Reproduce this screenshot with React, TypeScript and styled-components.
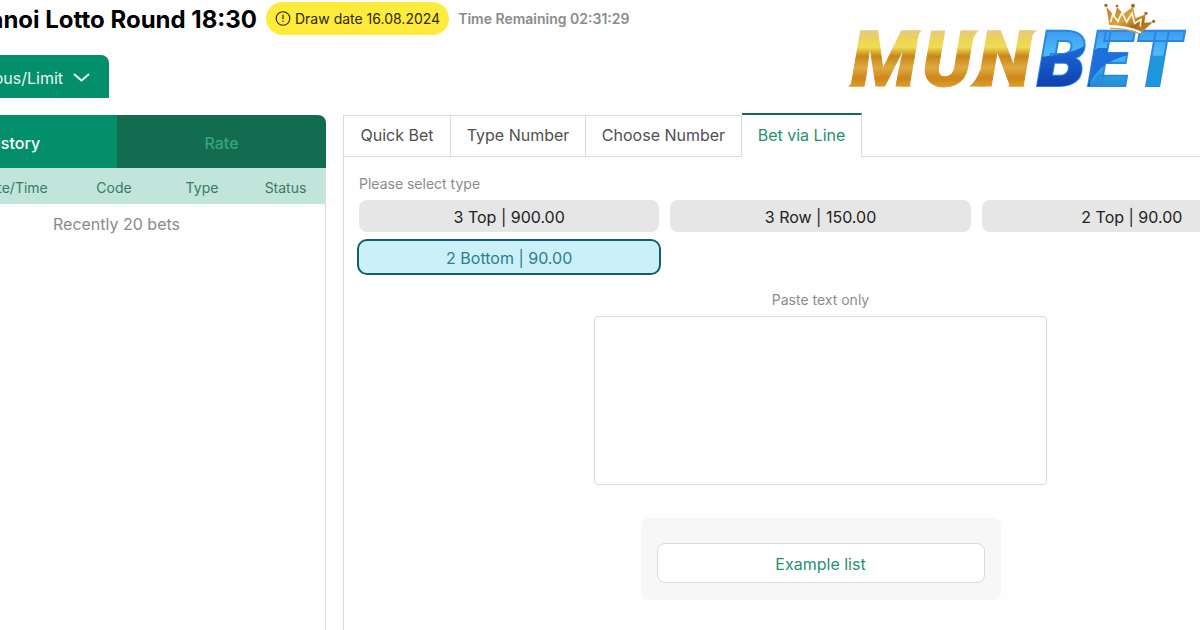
import React, { useState } from "react";
import styled, { createGlobalStyle, css } from "styled-components";

const GlobalStyle = createGlobalStyle`
  *, *::before, *::after { box-sizing: border-box; }
  body {
    margin: 0;
    background: #fefefe;
    color: #111;
    font-family: Inter, "Liberation Sans", sans-serif;
    font-size: 16px;
    overflow: hidden;
  }
  button, textarea { font: inherit; color: inherit; }
`;

const Viewport = styled.div`
  min-height: 100vh;
  overflow: hidden;
`;

const Page = styled.div`
  display: flex;
  flex-direction: column;
  min-height: 100vh;
  margin: 0 -98px 0 -92px;
`;

const Header = styled.header`
  display: flex;
  justify-content: space-between;
  align-items: flex-start;
  height: 115px;
  padding-right: 98px;
`;

const HeaderMain = styled.div`
  display: flex;
  flex-direction: column;
  align-items: flex-start;
  gap: 20px;
  padding-top: 2px;
`;

const TitleRow = styled.div`
  display: flex;
  align-items: center;
  gap: 9px;
  height: 33px;
`;

const Title = styled.h1`
  width: 349px;
  margin: 0;
  padding-top: 2px;
  font-size: 24px;
  line-height: 32px;
  font-weight: 700;
  color: #000;
  text-align: right;
  white-space: nowrap;
`;

const DatePill = styled.span`
  display: flex;
  align-items: center;
  gap: 4px;
  height: 33px;
  padding: 0 9px;
  border-radius: 17px;
  background: #ffeb3b;
  color: #2b2805;
  font-size: 14px;
  white-space: nowrap;
`;

const Remaining = styled.span`
  color: #8b8b8b;
  font-size: 14px;
  font-weight: 600;
  white-space: nowrap;
`;

const LimitButton = styled.button`
  display: flex;
  align-items: center;
  justify-content: flex-end;
  gap: 10px;
  width: 201px;
  height: 43px;
  padding: 2px 19px 0;
  border: 0;
  border-radius: 8px 8px 0 0;
  background: #048f6c;
  color: #e6f6f0;
`;

const Logo = styled.svg`
  flex: none;
  width: 360px;
  height: 100px;
`;

const Columns = styled.div`
  display: flex;
  flex: 1;
  gap: 17px;
`;

const Sidebar = styled.aside`
  flex: none;
  width: 418px;
  border-right: 1px solid #dcdfde;
  border-radius: 8px 8px 0 0;
`;

const SideTabs = styled.div`
  display: flex;
  height: 53px;
  margin-right: -1px;
  border-radius: 8px 8px 0 0;
  overflow: hidden;
`;

const SideTab = styled.button<{ $active: boolean }>`
  flex: 1;
  border: 0;
  padding: 2px 0 0;
  font-weight: 500;
  background: ${(p) => (p.$active ? "#048f6c" : "#136c50")};
  color: ${(p) => (p.$active ? "#fff" : "#2fa77c")};
`;

const History = styled.table`
  width: 100%;
  table-layout: fixed;
  border-collapse: collapse;
  text-align: center;
`;

const HeadCell = styled.th<{ $width?: number }>`
  width: ${(p) => (p.$width ? `${p.$width}px` : "auto")};
  height: 36px;
  padding: 2px 0 0 2px;
  background: #c1e5db;
  color: #3a7a66;
  font-size: 14px;
  font-weight: 400;
`;

const EmptyCell = styled.td`
  height: 40px;
  padding: 0;
  color: #8a8a8a;
`;

const Panel = styled.main`
  flex: 1;
  border-left: 1px solid #dadada;
`;

const Tabs = styled.nav`
  display: grid;
  grid-template-columns: 107px 135px 156px 120px 1fr;
  height: 42px;
`;

const TabRest = styled.div`
  border-bottom: 1px solid #dadada;
`;

const Tab = styled.button<{ $active: boolean }>`
  padding: 0 0 2px;
  border: solid #dadada;
  border-width: 1px 1px 1px 0;
  background: #fff;
  color: #505050;
  white-space: nowrap;
  ${(p) =>
    p.$active &&
    css`
      margin-top: -2px;
      border-top: 2px solid #136c50;
      border-bottom: 0;
      color: #259170;
    `}
`;

const PanelBody = styled.div`
  display: flex;
  flex-direction: column;
  padding: 17px 16px 0 15px;
`;

const Caption = styled.span`
  color: #8c8c8c;
  font-size: 14px;
  line-height: 20px;
`;

const Types = styled.div`
  display: grid;
  grid-template-columns: repeat(3, 1fr);
  gap: 9px 11px;
  margin-top: 6px;
`;

const TypeButton = styled.button<{ $active: boolean }>`
  height: 32px;
  padding: 2px 0 0;
  border: 0;
  border-radius: 8px;
  background: #e6e6e6;
  color: #222;
  ${(p) =>
    p.$active &&
    css`
      background: #ccf0f7;
      color: #2a7f8f;
      outline: 2px solid #0e606a;
    `}
`;

const PasteArea = styled.div`
  display: flex;
  flex-direction: column;
  align-items: center;
  gap: 6px;
  margin-top: 17px;
`;

const PasteLabel = styled.label`
  color: #8c8c8c;
  font-size: 14px;
  line-height: 20px;
`;

const PasteBox = styled.textarea`
  width: 453px;
  height: 169px;
  padding: 8px;
  border: 1px solid #dadada;
  border-radius: 4px;
  background: #fff;
  resize: none;
`;

const ExampleCard = styled.div`
  align-self: center;
  width: 360px;
  margin-top: 33px;
  padding: 25px 16px 17px;
  border-radius: 8px;
  background: #f7f7f7;
`;

const ExampleButton = styled.button`
  width: 100%;
  height: 40px;
  padding: 2px 0 0;
  border: 1px solid #dadada;
  border-radius: 8px;
  background: #fff;
  color: #259170;
`;

function AlertIcon() {
  return (
    <svg width="16" height="16" viewBox="0 0 16 16" fill="none" stroke="currentColor" aria-hidden="true">
      <circle cx="8" cy="7.5" r="6.8" strokeWidth="1.1" />
      <path d="M8 3.8v4.5" strokeWidth="1.2" />
      <path d="M8 9.7v1.4" strokeWidth="1.3" />
    </svg>
  );
}

function ChevronIcon() {
  return (
    <svg width="17" height="10" viewBox="0 0 17 10" fill="none" aria-hidden="true">
      <path d="M1.5 1.5l7 6 7-6" stroke="currentColor" strokeWidth="2" strokeLinecap="round" strokeLinejoin="round" />
    </svg>
  );
}

const logoText = {
  fontFamily: 'Roboto, "Liberation Sans", sans-serif',
  fontWeight: 900,
  fontStyle: "italic",
  fontSize: 78,
} as const;

function MunbetLogo() {
  return (
    <Logo viewBox="0 0 360 100" role="img" aria-label="MUNBET">
      <defs>
        <linearGradient id="gold" gradientUnits="userSpaceOnUse" x1="0" y1="30" x2="0" y2="87">
          <stop offset="0" stopColor="#e6c98c" />
          <stop offset="0.12" stopColor="#ecd05c" />
          <stop offset="0.3" stopColor="#eedd55" />
          <stop offset="0.46" stopColor="#c98619" />
          <stop offset="0.66" stopColor="#deaa40" />
          <stop offset="0.85" stopColor="#cf861b" />
          <stop offset="1" stopColor="#dba02a" />
        </linearGradient>
        <linearGradient id="sky" gradientUnits="userSpaceOnUse" x1="0" y1="30" x2="0" y2="87">
          <stop offset="0" stopColor="#3b9bf0" />
          <stop offset="0.4" stopColor="#4fb9fa" />
          <stop offset="0.6" stopColor="#35b0ec" />
          <stop offset="1" stopColor="#1c8fd0" />
        </linearGradient>
        <linearGradient id="deep" gradientUnits="userSpaceOnUse" x1="0" y1="45" x2="0" y2="87">
          <stop offset="0" stopColor="#1b6cd8" />
          <stop offset="1" stopColor="#103fb0" />
        </linearGradient>
        <linearGradient id="crown" x1="0" y1="0" x2="1" y2="1">
          <stop offset="0" stopColor="#b98224" />
          <stop offset="0.45" stopColor="#d9a441" />
          <stop offset="0.7" stopColor="#a86b14" />
          <stop offset="1" stopColor="#d29a36" />
        </linearGradient>
        <clipPath id="bet">
          <text x="197 248 293" y="86" {...logoText}>BET</text>
        </clipPath>
      </defs>
      <g fill="url(#gold)">
        <text x="11 82 138" y="86" stroke="url(#gold)" strokeWidth="1" {...logoText}>MUN</text>
        <path d="M8 86.5 H24 L18 70 Q14 82 8 86.5Z" />
        <path d="M60 86.5 H71 Q67 82 69 72Z" />
        <path d="M70 30.5 H82 Q76 35 74 48Z" />
        <path d="M122 30.5 H139 Q133 35 130 48Z" />
        <path d="M129 86.5 H146 L140 70 Q136 82 129 86.5Z" />
        <path d="M180 30.5 H197 Q190 35 187 48Z" />
        <path d="M168 86.5 H185 Q179 82 180 72Z" />
      </g>
      <text x="197 248 293" y="86" fill="url(#sky)" stroke="#2b86e2" strokeWidth="2" {...logoText}>BET</text>
      <g clipPath="url(#bet)">
        <path d="M190 57 Q228 57 250 43 L250 90 L190 90Z" fill="url(#deep)" />
        <path d="M245 90 L249 84 Q262 58 296 54 L296 48 L258 48 L240 60Z" fill="#1d6fdc" />
        <path d="M300 54 Q325 59 345 51 L338 90 L300 90Z" fill="#1e97dc" />
      </g>
      <g transform="scale(0.3333)">
        <path
          d="M808 76 L799 20 L824 49 L831 22 L851 41 L879 20 L887 55 L917 43 L913 68 L938 67 L907 96 Q858 74 808 76Z"
          fill="url(#crown)"
        />
        <path
          d="M812 66 L818 44 L834 64 L846 38 L860 66 L876 40 L884 70 L903 58 L901 80"
          fill="none"
          stroke="#fff6df"
          strokeWidth="5"
        />
        <path d="M808 80 Q858 78 903 98" fill="none" stroke="#fff" strokeWidth="6" />
        <path d="M810 85 Q858 84 896 100" fill="none" stroke="#d9a441" strokeWidth="4" />
        <g fill="#a86b1c">
          <circle cx="798" cy="16" r="5" />
          <circle cx="831" cy="18" r="4" />
          <circle cx="879" cy="17" r="6" />
          <circle cx="918" cy="40" r="5" />
          <circle cx="941" cy="64" r="5" />
        </g>
      </g>
    </Logo>
  );
}

const betTabs = ["Quick Bet", "Type Number", "Choose Number", "Bet via Line"];
const betTypes = ["3 Top | 900.00", "3 Row | 150.00", "2 Top | 90.00", "2 Bottom | 90.00"];

export default function App() {
  const [sideTab, setSideTab] = useState("History");
  const [tab, setTab] = useState("Bet via Line");
  const [type, setType] = useState("2 Bottom | 90.00");

  return (
    <Viewport>
      <GlobalStyle />
      <Page>
        <Header>
          <HeaderMain>
            <TitleRow>
              <Title>Hanoi Lotto Round 18:30</Title>
              <DatePill>
                <AlertIcon />
                Draw date 16.08.2024
              </DatePill>
              <Remaining>Time Remaining 02:31:29</Remaining>
            </TitleRow>
            <LimitButton type="button">
              Previous/Limit
              <ChevronIcon />
            </LimitButton>
          </HeaderMain>
          <MunbetLogo />
        </Header>
        <Columns>
          <Sidebar>
            <SideTabs>
              {["History", "Rate"].map((name) => (
                <SideTab key={name} type="button" $active={name === sideTab} onClick={() => setSideTab(name)}>
                  {name}
                </SideTab>
              ))}
            </SideTabs>
            <History>
              <thead>
                <tr>
                  <HeadCell $width={49}>No.</HeadCell>
                  <HeadCell>Date/Time</HeadCell>
                  <HeadCell $width={90}>Code</HeadCell>
                  <HeadCell $width={86}>Type</HeadCell>
                  <HeadCell $width={81}>Status</HeadCell>
                </tr>
              </thead>
              <tbody>
                <tr>
                  <EmptyCell colSpan={5}>Recently 20 bets</EmptyCell>
                </tr>
              </tbody>
            </History>
          </Sidebar>
          <Panel>
            <Tabs>
              {betTabs.map((name) => (
                <Tab key={name} type="button" $active={name === tab} onClick={() => setTab(name)}>
                  {name}
                </Tab>
              ))}
              <TabRest />
            </Tabs>
            <PanelBody>
              <Caption>Please select type</Caption>
              <Types>
                {betTypes.map((name) => (
                  <TypeButton key={name} type="button" $active={name === type} onClick={() => setType(name)}>
                    {name}
                  </TypeButton>
                ))}
              </Types>
              <PasteArea>
                <PasteLabel htmlFor="paste">Paste text only</PasteLabel>
                <PasteBox id="paste" />
              </PasteArea>
              <ExampleCard>
                <ExampleButton type="button">Example list</ExampleButton>
              </ExampleCard>
            </PanelBody>
          </Panel>
        </Columns>
      </Page>
    </Viewport>
  );
}
